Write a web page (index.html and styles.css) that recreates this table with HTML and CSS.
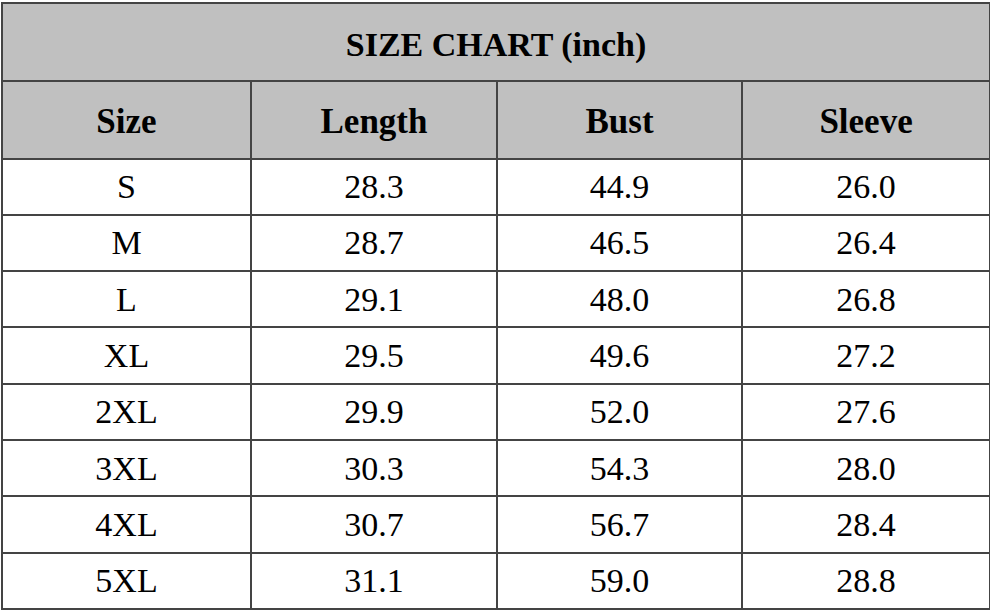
FILE: index.html
```html
<!DOCTYPE html>
<html>
<head>
<meta charset="utf-8">
<link rel="stylesheet" href="styles.css">
</head>
<body>
<table class="chart">
  <colgroup>
    <col class="c1"><col class="c2"><col class="c3"><col class="c4">
  </colgroup>
  <thead>
    <tr class="title-row"><th colspan="4">SIZE CHART (inch)</th></tr>
    <tr class="head-row"><th>Size</th><th>Length</th><th>Bust</th><th>Sleeve</th></tr>
  </thead>
  <tbody>
    <tr><td>S</td><td>28.3</td><td>44.9</td><td>26.0</td></tr>
    <tr><td>M</td><td>28.7</td><td>46.5</td><td>26.4</td></tr>
    <tr><td>L</td><td>29.1</td><td>48.0</td><td>26.8</td></tr>
    <tr><td>XL</td><td>29.5</td><td>49.6</td><td>27.2</td></tr>
    <tr><td>2XL</td><td>29.9</td><td>52.0</td><td>27.6</td></tr>
    <tr><td>3XL</td><td>30.3</td><td>54.3</td><td>28.0</td></tr>
    <tr><td>4XL</td><td>30.7</td><td>56.7</td><td>28.4</td></tr>
    <tr><td>5XL</td><td>31.1</td><td>59.0</td><td>28.8</td></tr>
  </tbody>
</table>
</body>
</html>
```

FILE: styles.css
```css
html, body {
  margin: 0;
  padding: 0;
  background: #ffffff;
}

.chart {
  margin: 2px 0 0 1px;
  width: 988px;
  table-layout: fixed;
  border-collapse: collapse;
  font-family: "Liberation Serif", "Times New Roman", serif;
  color: #000;
}

.c1 { width: 249px; }
.c2 { width: 246px; }
.c3 { width: 245px; }
.c4 { width: 248px; }

.chart th,
.chart td {
  border: 2px solid #444;
  text-align: center;
  vertical-align: middle;
  padding: 0;
}

.chart th {
  background: #c0c0c0;
  font-weight: bold;
}

.title-row th {
  height: 69.5px;
  font-size: 34px;
  padding-top: 6px;
}

.head-row th {
  height: 72px;
  font-size: 35px;
  padding-top: 4px;
}

.chart td {
  height: 53.3px;
  font-size: 34px;
  padding-top: 1px;
}
```
